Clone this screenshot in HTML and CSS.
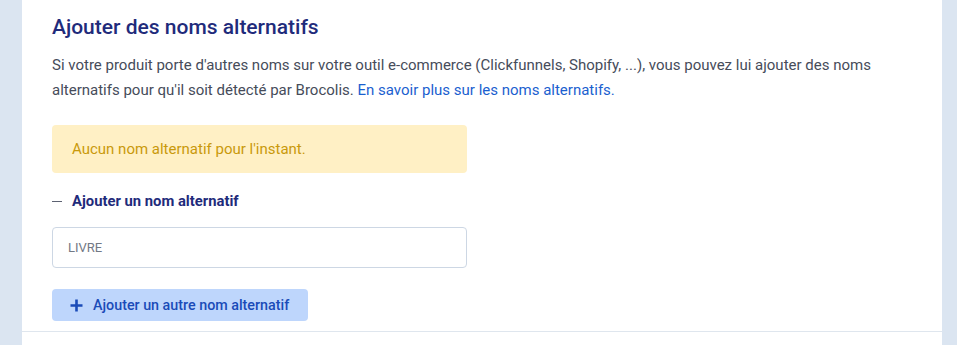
FILE: index.html
```html
<!DOCTYPE html>
<html lang="fr">
<head>
<meta charset="utf-8">
<title>Noms alternatifs</title>
<link rel="stylesheet" href="styles.css">
</head>
<body>
<div class="layout">
  <main class="panel">
    <section class="section">
      <h2 class="title">Ajouter des noms alternatifs</h2>
      <p class="desc">Si votre produit porte d'autres noms sur votre outil e-commerce (Clickfunnels, Shopify, ...), vous pouvez lui ajouter des noms alternatifs pour qu'il soit détecté par Brocolis. <a class="link" href="#">En savoir plus sur les noms alternatifs.</a></p>
      <div class="notice">Aucun nom alternatif pour l'instant.</div>
      <div class="toggle"><span class="dash"></span><span class="toggle-label">Ajouter un nom alternatif</span></div>
      <input class="field" type="text" placeholder="LIVRE">
      <button class="add-btn" type="button">
        <svg class="plus" width="13" height="13" viewBox="0 0 13 13"><path d="M6.5 0.5v12M0.5 6.5h12" stroke="currentColor" stroke-width="2.6" stroke-linecap="butt" fill="none"/></svg>
        <span>Ajouter un autre nom alternatif</span>
      </button>
    </section>
  </main>
</div>
</body>
</html>
```
FILE: styles.css
```css
html, body {
  margin: 0;
  padding: 0;
}
body {
  background: #dbe5f1;
  font-family: Roboto, "Liberation Sans", Arial, sans-serif;
  height: 345px;
  overflow: hidden;
}
.layout {
  display: flex;
  padding: 0 15px 0 22px;
  height: 345px;
}
.panel {
  flex: 1;
  background: #ffffff;
}
.section {
  padding: 13px 30px 10px 30px;
  border-bottom: 1px solid #dfe6ee;
  display: flex;
  flex-direction: column;
  align-items: flex-start;
}
.title {
  margin: 0;
  font-size: 21px;
  line-height: 28px;
  font-weight: 500;
  color: #1f2b7b;
}
.desc {
  margin: 12px 0 0 0;
  max-width: 830px;
  font-size: 15px;
  line-height: 25px;
  color: #464c5a;
}
.link {
  color: #1b5fcf;
  text-decoration: none;
}
.notice {
  margin-top: 22px;
  width: 415px;
  box-sizing: border-box;
  height: 48px;
  line-height: 48px;
  padding: 0 20px;
  background: #fff0c5;
  border-radius: 4px;
  color: #c9990b;
  font-size: 15px;
}
.toggle {
  margin-top: 18px;
  display: flex;
  align-items: center;
  height: 20px;
}
.dash {
  width: 10px;
  height: 1px;
  background: #5c6272;
  margin-right: 10px;
}
.toggle-label {
  font-size: 14.8px;
  font-weight: 700;
  color: #1f2b7b;
}
.field {
  margin-top: 16px;
  width: 415px;
  height: 41px;
  box-sizing: border-box;
  border: 1px solid #cdd7e4;
  border-radius: 4px;
  padding: 0 15px;
  font-family: inherit;
  font-size: 13px;
  color: #333;
  outline: none;
}
.field::placeholder {
  color: #727985;
}
.add-btn {
  margin-top: 21px;
  display: flex;
  align-items: center;
  gap: 10px;
  height: 32px;
  padding: 0 19px 0 18px;
  border: none;
  border-radius: 4px;
  background: #bed6fc;
  color: #1a4bb8;
  font-family: inherit;
  font-size: 14.3px;
  font-weight: 500;
  cursor: pointer;
}
.plus {
  display: block;
}
```
